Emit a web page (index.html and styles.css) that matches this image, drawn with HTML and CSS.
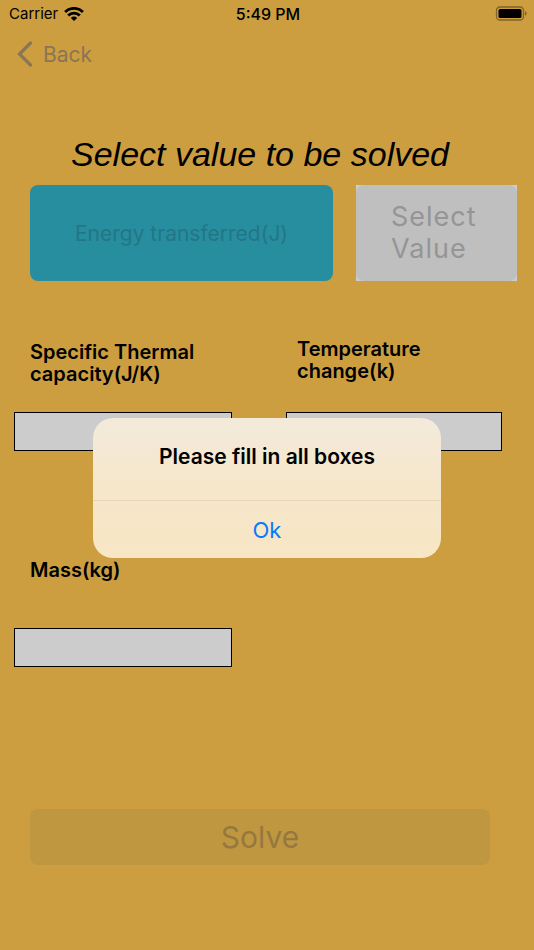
FILE: index.html
```html
<!DOCTYPE html>
<html lang="en">
<head>
<meta charset="utf-8">
<meta name="viewport" content="width=device-width, initial-scale=1">
<title>Solve for energy</title>
<link rel="stylesheet" href="styles.css">
</head>
<body>
<header class="status">
  <div class="carrier">
    <span>Carrier</span>
    <svg width="20" height="14" viewBox="0 0 20 14" aria-hidden="true">
      <g fill="none" stroke="#000" stroke-width="2.9">
        <path d="M1.1 5a12.7 12.7 0 0 1 17.8 0"/>
        <path d="M4.2 8.5a8.2 8.2 0 0 1 11.6 0"/>
      </g>
      <path d="M10 14 6.8 10.9a4.6 4.6 0 0 1 6.4 0z"/>
    </svg>
  </div>
  <time class="clock">5:49 PM</time>
  <svg class="battery" width="32" height="15" viewBox="0 0 32 15" aria-hidden="true">
    <rect x="1.5" y="1" width="27" height="13" rx="3.5" fill="none" stroke="#80622a" stroke-width="1.3"/>
    <rect x="3.5" y="3" width="23" height="9" rx="1.5"/>
    <path d="M30 5.3q1.7.6 1.7 2.2t-1.7 2.2z" fill="#80622a"/>
  </svg>
</header>
<nav class="nav">
  <button class="back" type="button">
    <svg width="16" height="26" viewBox="0 0 16 26" aria-hidden="true">
      <path d="M13.5 2 2.5 13l11 11" fill="none" stroke="#8a7555" stroke-width="3.2" stroke-linecap="round" stroke-linejoin="miter"/>
    </svg>
    <span>Back</span>
  </button>
</nav>
<main>
  <h1 class="heading">Select value to be solved</h1>
  <div class="choice">
    <button class="target" type="button">Energy transferred(J)</button>
    <div class="select-frame">
      <button class="select" type="button">Select<br>Value</button>
    </div>
  </div>
  <form class="fields">
    <div class="field">
      <label for="capacity">Specific Thermal<br>capacity(J/K)</label>
      <input id="capacity" type="text">
    </div>
    <div class="field field-end">
      <label for="temperature">Temperature<br>change(k)</label>
      <input id="temperature" type="text">
    </div>
    <div class="field field-single">
      <label for="mass">Mass(kg)</label>
      <input id="mass" type="text">
    </div>
  </form>
  <button class="solve" type="button">Solve</button>
</main>
<div class="alert" role="alertdialog" aria-labelledby="alert-title">
  <h2 class="alert-title" id="alert-title">Please fill in all boxes</h2>
  <button class="alert-ok" type="button">Ok</button>
</div>
</body>
</html>
```
FILE: styles.css
```css
* {
  box-sizing: border-box;
}

body {
  position: relative;
  min-height: 100vh;
  margin: 0;
  background: #cc9e3f;
  color: #000;
  font-family: Inter, "Liberation Sans", sans-serif;
}

button {
  margin: 0;
  padding: 0;
  border: 0;
  background: none;
  font: inherit;
}

svg {
  display: block;
}

.status {
  display: grid;
  grid-template-columns: 1fr auto 1fr;
  align-items: center;
  height: 27px;
  padding: 0 7px 0 9px;
  font-size: 15px;
}

.carrier {
  display: flex;
  align-items: center;
  gap: 6px;
}

.clock {
  font-size: 16px;
  font-weight: 500;
}

.battery {
  justify-self: end;
}

.nav {
  display: flex;
  align-items: center;
  height: 54px;
  padding-left: 17px;
}

.back {
  display: flex;
  align-items: center;
  gap: 10px;
  color: #8a7555;
  font-size: 21px;
}

.heading {
  margin: 53px 14px 0 0;
  font: italic 34px/40px "Liberation Sans", sans-serif;
  text-align: center;
}

.choice {
  display: grid;
  grid-template-columns: 303fr 161fr;
  gap: 23px;
  height: 96px;
  margin: 11px 17px 0 30px;
}

.target {
  border-radius: 8px;
  background: #268e9f;
  color: #247686;
  font-size: 21px;
}

.select-frame {
  display: grid;
  background: #cdcdcd;
}

.select {
  padding-left: 35px;
  border-radius: 8px;
  background: #bfbfbf;
  color: #959595;
  font-size: 27px;
  line-height: 32px;
  letter-spacing: 1px;
  text-align: left;
}

.fields {
  display: grid;
  grid-template-columns: 218fr 216fr;
  column-gap: 54px;
  row-gap: 104px;
  margin: 56px 32px 0 14px;
}

.field {
  display: flex;
  flex-direction: column;
  justify-content: space-between;
  gap: 27px;
}

.field-single {
  gap: 47px;
}

.field label {
  padding: 4px 0 0 16px;
  font-size: 20px;
  font-weight: 600;
  line-height: 22px;
}

.field-end label {
  padding: 1px 0 0 11px;
}

.field input {
  width: 100%;
  height: 39px;
  padding: 0 8px;
  border: 1px solid #000;
  border-radius: 0;
  background: #ccc;
  font: inherit;
}

.solve {
  display: block;
  width: calc(100% - 74px);
  height: 56px;
  margin: 142px 0 0 30px;
  border-radius: 8px;
  background: #bf9741;
  color: #96783e;
  font-size: 30px;
}

.alert {
  position: absolute;
  top: 418px;
  left: 50%;
  width: 348px;
  max-width: 90%;
  border-radius: 20px;
  background: linear-gradient(#f3eadb, #f6e7cb 50%, #f8e6c4);
  transform: translateX(-50%);
  overflow: hidden;
  text-align: center;
}

.alert-title {
  margin: 0;
  padding: 26px 16px 30px;
  border-bottom: 1px solid #e8d7b2;
  font-size: 21px;
  font-weight: 600;
  line-height: 26px;
}

.alert-ok {
  width: 100%;
  height: 57px;
  color: #087aff;
  font-size: 22px;
}
```
